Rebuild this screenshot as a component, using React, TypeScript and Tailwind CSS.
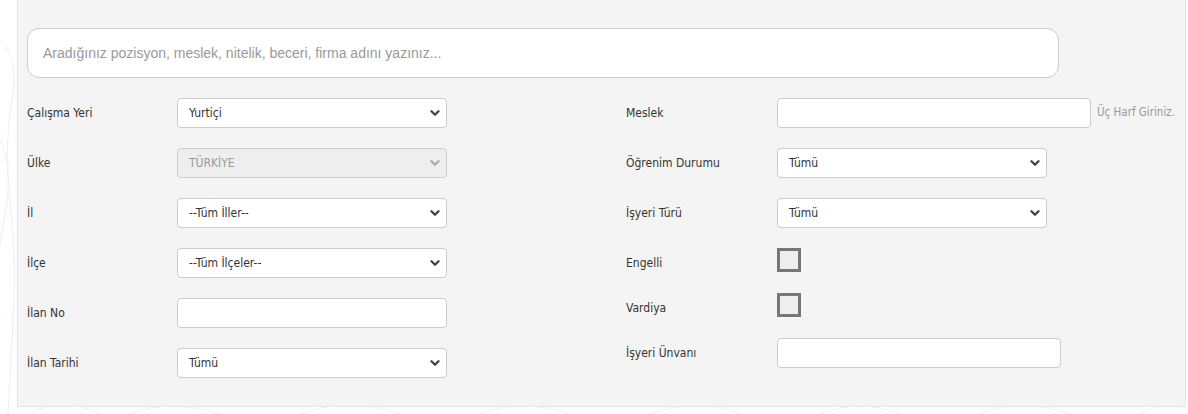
import React from "react";

const labelFont = "font-['Tahoma','DejaVu_Sans_Condensed','DejaVu_Sans',sans-serif]";

function Chevron({ color = "#444" }: { color?: string }) {
  return (
    <svg width="10" height="7" viewBox="0 0 10 7" className="absolute right-[6px] top-1/2 -translate-y-1/2 pointer-events-none">
      <path d="M1.5 1.7 L5 5.2 L8.5 1.7" fill="none" stroke={color} strokeWidth="2.3" strokeLinecap="round" strokeLinejoin="round" />
    </svg>
  );
}

function Select({ value, width = "w-[270px]", disabled = false }: { value: string; width?: string; disabled?: boolean }) {
  return (
    <div
      className={`relative h-[30px] ${width} rounded-[4px] border border-[#cccccc] flex items-center pl-[11px] ${
        disabled ? "bg-[#eeeeee] text-[#999999]" : "bg-white text-[#333333]"
      } text-[12px] ${labelFont}`}
    >
      {value}
      <Chevron color={disabled ? "#aaaaaa" : "#444444"} />
    </div>
  );
}

function TextBox({ width }: { width: string }) {
  return <div className={`h-[30px] ${width} rounded-[4px] border border-[#cccccc] bg-white`} />;
}

function Checkbox() {
  return <div className="w-[24px] h-[24px] border-[3px] border-[#777777] bg-[#efefef]" />;
}

function Row({
  label,
  children,
  h = "h-[30px]",
  lw = "w-[150px]",
  shift = "",
}: {
  label: string;
  children: React.ReactNode;
  h?: string;
  lw?: string;
  shift?: string;
}) {
  return (
    <div className={`flex items-center ${h}`}>
      <div className={`${lw} shrink-0 text-[12px] text-[#333333] ${labelFont} ${shift}`}>{label}</div>
      {children}
    </div>
  );
}

export default function App() {
  return (
    <div className="w-[1188px] h-[414px] bg-white overflow-hidden relative">
      <svg className="absolute inset-0" width="1188" height="414" viewBox="0 0 1188 414">
        <g fill="none" stroke="#f0f0f0" strokeWidth="1">
          <path d="M0 40 Q20 60 12 100 T10 200 T14 300 T8 414" />
          <path d="M0 140 Q14 170 4 220 T0 320" />
          <path d="M30 414 Q60 395 100 414" />
          <path d="M130 414 Q170 398 220 414" />
          <path d="M300 414 Q350 396 400 414" />
          <path d="M480 414 Q520 398 570 414" />
          <path d="M650 414 Q700 396 740 414" />
          <path d="M820 414 Q860 398 900 414" />
          <path d="M980 414 Q1020 396 1070 414" />
          <path d="M1140 414 Q1165 398 1188 410" />
        </g>
      </svg>
      <div className="relative ml-[17px] mr-[2px] border-x border-b border-[#e3e3e3] bg-[#f4f4f4] pl-[9px] pt-[28px] pb-[28px]">
        <div className="w-[1032px] h-[50px] rounded-[12px] border border-[#cccccc] bg-white flex items-center pl-[15px] text-[14px] text-[#999999] font-['Liberation_Sans',Arial,sans-serif]">
          Aradığınız pozisyon, meslek, nitelik, beceri, firma adını yazınız...
        </div>
        <div className="mt-[20px] grid grid-cols-[599px_1fr]">
          <div className="flex flex-col gap-[20px]">
            <Row label="Çalışma Yeri"><Select value="Yurtiçi" /></Row>
            <Row label="Ülke"><Select value="TÜRKİYE" disabled /></Row>
            <Row label="İl"><Select value="--Tüm İller--" /></Row>
            <Row label="İlçe"><Select value="--Tüm İlçeler--" /></Row>
            <Row label="İlan No"><TextBox width="w-[270px]" /></Row>
            <Row label="İlan Tarihi"><Select value="Tümü" /></Row>
          </div>
          <div className="flex flex-col gap-[20px]">
            <Row label="Meslek" lw="w-[151px]">
              <TextBox width="w-[314px]" />
              <span className={`ml-[6px] text-[11.5px] text-[#999999] ${labelFont}`}>Üç Harf Giriniz.</span>
            </Row>
            <Row label="Öğrenim Durumu" lw="w-[151px]"><Select value="Tümü" /></Row>
            <Row label="İşyeri Türü" lw="w-[151px]"><Select value="Tümü" /></Row>
            <Row label="Engelli" h="h-[25px]" lw="w-[151px]" shift="translate-y-[2px]"><div className="self-start"><Checkbox /></div></Row>
            <Row label="Vardiya" h="h-[25px]" lw="w-[151px]" shift="translate-y-[2px]"><div className="self-start"><Checkbox /></div></Row>
            <Row label="İşyeri Ünvanı" lw="w-[151px]"><TextBox width="w-[284px]" /></Row>
          </div>
        </div>
      </div>
    </div>
  );
}
